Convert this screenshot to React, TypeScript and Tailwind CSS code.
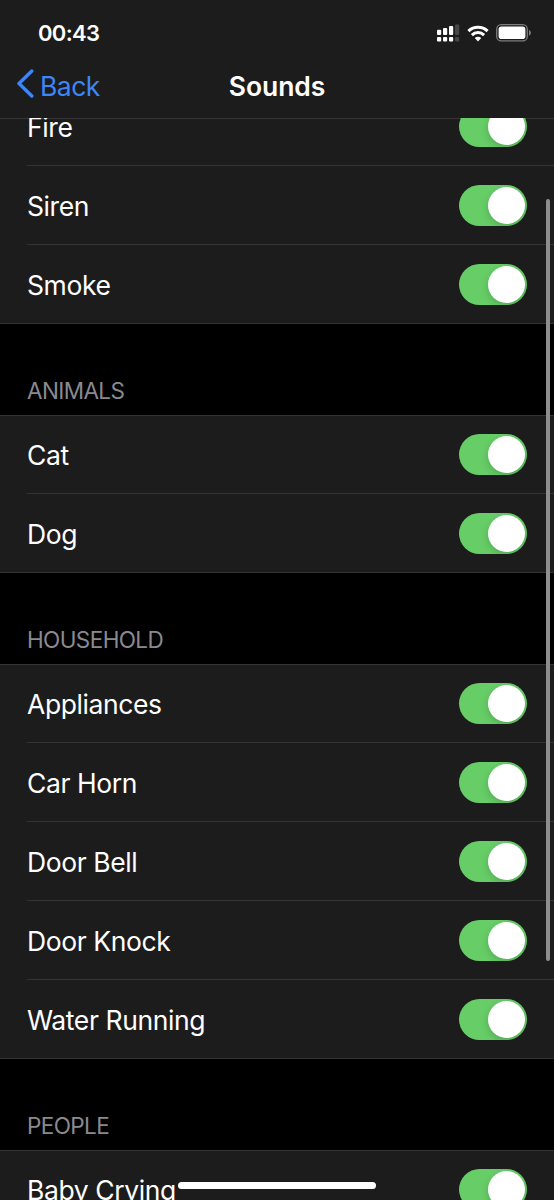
import clsx from "clsx"

const sections = [
  { title: "", items: ["Fire", "Siren", "Smoke"] },
  { title: "Animals", items: ["Cat", "Dog"] },
  {
    title: "Household",
    items: ["Appliances", "Car Horn", "Door Bell", "Door Knock", "Water Running"],
  },
  { title: "People", items: ["Baby Crying"] },
]

const SignalIcon = () => (
  <svg width="23" height="18" viewBox="0 0 23 18" fill="#fff">
    <rect x="0" y="5.7" width="4.2" height="5.3" rx="1" />
    <rect x="6" y="4" width="4.2" height="7" rx="1" />
    <rect x="12" y="2" width="4.2" height="9" rx="1" />
    <rect x="18" y="0.5" width="4.2" height="10.5" rx="1" fill="#48484a" />
    <rect x="0" y="13" width="4.2" height="4.5" rx="1" />
    <rect x="6" y="13" width="4.2" height="4.5" rx="1" />
    <rect x="12" y="13" width="4.2" height="4.5" rx="1" />
    <rect x="18" y="13" width="4.2" height="4.5" rx="1" fill="#48484a" />
  </svg>
)

const WifiIcon = () => (
  <svg width="22" height="17" viewBox="0 0 22 17" fill="none" stroke="#fff" strokeWidth="3">
    <path d="M1.4 6.1a14 14 0 0 1 19.2 0" />
    <path d="M4.9 10.1a8.7 8.7 0 0 1 12.2 0" />
    <path d="M7.8 13a4.5 4.5 0 0 1 6.4 0L11 16.4Z" fill="#fff" stroke="none" />
  </svg>
)

const BatteryIcon = () => (
  <svg width="36" height="18" viewBox="0 0 36 18" fill="none">
    <rect x="0.7" y="0.7" width="30.6" height="16.2" rx="4.5" stroke="#7c7c7e" strokeWidth="1.3" />
    <rect x="2.6" y="2.6" width="26.8" height="12.4" rx="2.8" fill="#fff" />
    <path d="M33 6v5.6c2.6-.9 2.6-4.7 0-5.6Z" fill="#7c7c7e" />
  </svg>
)

const Switch = () => (
  <button
    role="switch"
    aria-checked="true"
    className="flex h-[41px] w-[68px] shrink-0 items-center justify-end overflow-hidden rounded-full bg-[#67ce67] pr-[2px]"
  >
    <span className="size-[37px] rounded-full bg-white shadow-[0_3px_8px_rgba(0,0,0,0.18)]" />
  </button>
)

const Row = ({ label, last }: { label: string; last: boolean }) => (
  <li className="relative flex h-[79px] items-center justify-between pl-[27px] pr-[27px]">
    <span className="pt-px text-[26.5px] leading-8 tracking-[-0.4px] text-white">{label}</span>
    <Switch />
    <span className={clsx("absolute bottom-0 right-0 h-px bg-[#333335]", last ? "left-0" : "left-[27px]")} />
  </li>
)

export default function App() {
  return (
    <div className="relative flex h-[1200px] w-[554px] flex-col overflow-hidden bg-black font-['Inter',sans-serif]">
      <header className="flex h-[118px] shrink-0 flex-col bg-[#1c1c1c]">
        <div className="flex h-[58px] items-center justify-between pl-[38px] pr-[22px] pt-[8px]">
          <span className="text-[22px] font-semibold leading-7 tracking-[-0.7px] text-white">00:43</span>
          <div className="flex items-center gap-[7px]">
            <SignalIcon />
            <WifiIcon />
            <BatteryIcon />
          </div>
        </div>
        <div className="grid h-[58px] grid-cols-3 items-center">
          <a href="#" className="flex items-center gap-[6px] pl-[17px] text-[#3d86f7]">
            <svg
              width="17"
              height="29"
              viewBox="0 0 17 29"
              fill="none"
              stroke="currentColor"
              strokeWidth="3.4"
              strokeLinecap="round"
              strokeLinejoin="round"
              className="-mt-[8px]"
            >
              <path d="M14.8 2 2 14.5 14.8 27" />
            </svg>
            <span className="-mt-[2px] text-[26.5px] leading-8 tracking-[-0.5px]">Back</span>
          </a>
          <h1 className="-mt-[2px] text-center text-[26.5px] font-semibold leading-8 tracking-[-0.1px] text-white">
            Sounds
          </h1>
        </div>
      </header>
      <main className="min-h-0 flex-1 overflow-hidden">
        <div className="-mt-[31px]">
          {sections.map(({ title, items }) => (
            <section key={items[0]}>
              {title && (
                <h2 className="flex h-[91px] items-end pb-[10px] pl-[27px] text-[22.5px] leading-7 tracking-[-0.6px] text-[#8a8a8e] uppercase">
                  {title}
                </h2>
              )}
              <ul className={clsx("relative bg-[#1c1c1c]", title && "shadow-[inset_0_1px_0_#333335]")}>
                {/* header hairline, the scrolled rows pass over it */}
                {!title && <li className="absolute inset-x-0 top-[31px] h-px bg-[#363638]" />}
                {items.map((item, i) => (
                  <Row key={item} label={item} last={i === items.length - 1} />
                ))}
              </ul>
            </section>
          ))}
        </div>
      </main>
      <div className="absolute right-[4px] top-[199px] h-[762px] w-[4px] rounded-full bg-[#8e8e8e]" />
      <div className="absolute bottom-[11px] left-[178px] h-[7px] w-[198px] rounded-full bg-white" />
    </div>
  )
}
